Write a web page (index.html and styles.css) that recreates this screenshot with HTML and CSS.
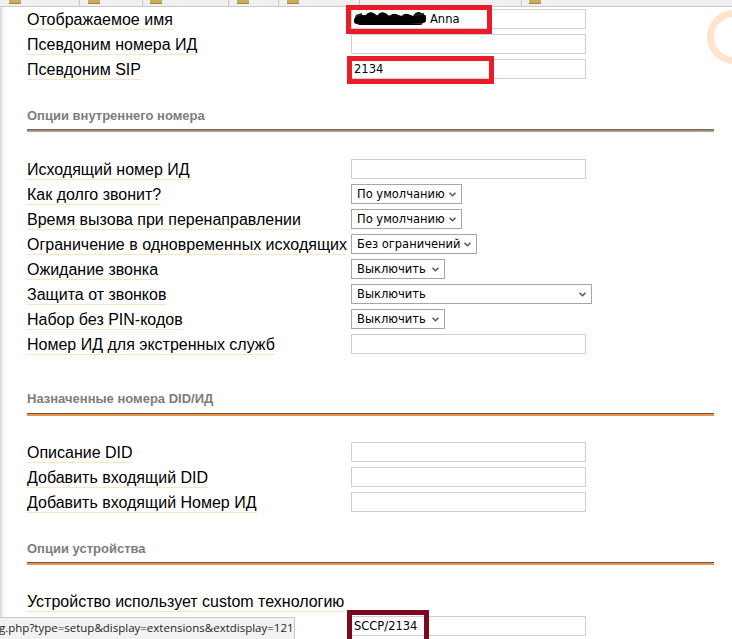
FILE: index.html
```html
<!DOCTYPE html>
<html lang="ru">
<head>
<meta charset="utf-8">
<title>Extension</title>
<link rel="stylesheet" href="styles.css">
</head>
<body>
<div class="tabs">
  <div class="tab t1"><span class="ico"></span></div>
  <div class="tab t2"><span class="ico"></span></div>
  <div class="tab t3"><span class="ico"></span></div>
  <div class="tab t4"><span class="ico"></span></div>
  <div class="tab t5"><span class="ico"></span></div>
  <div class="tab t6"></div>
  <div class="tab t7"><span class="ico"></span></div>
</div>

<div class="ring"></div>

<main class="content">
  <div class="row">
    <div class="lab"><span>Отображаемое имя</span></div>
    <div class="field">
      <div class="inp">
        <svg class="scribble" width="72" height="16" viewBox="0 0 72 16"><path d="M3 9 C6 4,10 12,14 6 S22 12,26 6 S34 12,38 7 S46 12,50 7 S58 12,62 6 S68 10,70 7 M3 10 L69 9 M4 7 L68 8 M6 11 L66 11" fill="none" stroke="#000" stroke-width="6" stroke-linecap="round"/><path d="M2 5 L8 3 M60 4 L70 3" stroke="#222" stroke-width="2" fill="none"/></svg>
        <span class="val">Anna</span>
      </div>
      <div class="mark red m1"></div>
    </div>
  </div>
  <div class="row">
    <div class="lab"><span>Псевдоним номера ИД</span></div>
    <div class="field"><div class="inp"></div></div>
  </div>
  <div class="row">
    <div class="lab"><span>Псевдоним SIP</span></div>
    <div class="field">
      <div class="inp"><span class="val">2134</span></div>
      <div class="mark red m2"></div>
    </div>
  </div>

  <div class="section s1">
    <div class="sec-title">Опции внутреннего номера</div>
    <div class="sec-line grey"></div>
  </div>

  <div class="row">
    <div class="lab"><span>Исходящий номер ИД</span></div>
    <div class="field"><div class="inp"></div></div>
  </div>
  <div class="row">
    <div class="lab"><span>Как долго звонит?</span></div>
    <div class="field"><div class="sel w111"><span>По умолчанию</span><svg width="7" height="5" viewBox="0 0 7 5"><path d="M0.5 0.8 L3.5 3.8 L6.5 0.8" fill="none" stroke="#555" stroke-width="1.5"/></svg></div></div>
  </div>
  <div class="row">
    <div class="lab"><span>Время вызова при перенаправлении</span></div>
    <div class="field"><div class="sel w111"><span>По умолчанию</span><svg width="7" height="5" viewBox="0 0 7 5"><path d="M0.5 0.8 L3.5 3.8 L6.5 0.8" fill="none" stroke="#555" stroke-width="1.5"/></svg></div></div>
  </div>
  <div class="row">
    <div class="lab"><span>Ограничение в одновременных исходящих</span></div>
    <div class="field"><div class="sel w126"><span>Без ограничений</span><svg width="7" height="5" viewBox="0 0 7 5"><path d="M0.5 0.8 L3.5 3.8 L6.5 0.8" fill="none" stroke="#555" stroke-width="1.5"/></svg></div></div>
  </div>
  <div class="row">
    <div class="lab"><span>Ожидание звонка</span></div>
    <div class="field"><div class="sel w94"><span>Выключить</span><svg width="7" height="5" viewBox="0 0 7 5"><path d="M0.5 0.8 L3.5 3.8 L6.5 0.8" fill="none" stroke="#555" stroke-width="1.5"/></svg></div></div>
  </div>
  <div class="row">
    <div class="lab"><span>Защита от звонков</span></div>
    <div class="field"><div class="sel w241"><span>Выключить</span><svg width="7" height="5" viewBox="0 0 7 5"><path d="M0.5 0.8 L3.5 3.8 L6.5 0.8" fill="none" stroke="#555" stroke-width="1.5"/></svg></div></div>
  </div>
  <div class="row">
    <div class="lab"><span>Набор без PIN-кодов</span></div>
    <div class="field"><div class="sel w94"><span>Выключить</span><svg width="7" height="5" viewBox="0 0 7 5"><path d="M0.5 0.8 L3.5 3.8 L6.5 0.8" fill="none" stroke="#555" stroke-width="1.5"/></svg></div></div>
  </div>
  <div class="row">
    <div class="lab"><span>Номер ИД для экстренных служб</span></div>
    <div class="field"><div class="inp"></div></div>
  </div>

  <div class="section s3">
    <div class="sec-title">Назначенные номера DID/ИД</div>
    <div class="sec-line"></div>
  </div>

  <div class="row">
    <div class="lab"><span>Описание DID</span></div>
    <div class="field"><div class="inp"></div></div>
  </div>
  <div class="row">
    <div class="lab"><span>Добавить входящий DID</span></div>
    <div class="field"><div class="inp"></div></div>
  </div>
  <div class="row">
    <div class="lab"><span>Добавить входящий Номер ИД</span></div>
    <div class="field"><div class="inp"></div></div>
  </div>

  <div class="section s4">
    <div class="sec-title">Опции устройства</div>
    <div class="sec-line"></div>
  </div>

  <div class="row wide">
    <div class="lab"><span>Устройство использует custom технологию</span></div>
  </div>
  <div class="row">
    <div class="lab"></div>
    <div class="field">
      <div class="inp"><span class="val">SCCP/2134</span></div>
      <div class="mark dark m3"></div>
    </div>
  </div>
</main>

<div class="status">g.php?type=setup&amp;display=extensions&amp;extdisplay=121</div>
</body>
</html>
```

FILE: styles.css
```css
html, body {
  margin: 0;
  padding: 0;
  overflow: hidden;
  height: 639px;
}
body {
  position: relative;
  background: linear-gradient(to right, #d4d4d4 0px, #ececec 2px, #fafafa 4px, #ffffff 6px);
  font-family: "Liberation Sans", Arial, sans-serif;
  color: #000;
}

.tabs {
  display: flex;
  height: 6px;
  background: #f0f0f0;
  border-bottom: 1px solid #c9c9c9;
  overflow: hidden;
}
.tab {
  height: 6px;
  border-right: 1px solid #c6c6c6;
  box-sizing: border-box;
  padding-left: 8px;
}
.tab.t1 { width: 80px; padding-left: 9px; }
.tab.t2 { width: 63px; }
.tab.t3 { width: 86px; padding-left: 7px; }
.tab.t4 { width: 50px; }
.tab.t5 { width: 81px; }
.tab.t6 { width: 162px; }
.tab.t7 { width: 60px; border-right: none; padding-left: 7px; }
.ico {
  display: block;
  width: 12px;
  height: 3px;
  background: #c9ad5a;
  border-bottom: 1px solid #9c8840;
}

.ring {
  position: absolute;
  left: 707px;
  top: 10px;
  width: 40px;
  height: 40px;
  border: 7px solid #fde4ca;
  border-radius: 50%;
}

.content {
  padding-left: 27px;
  padding-right: 18px;
}

.row {
  display: flex;
  height: 25px;
}
.lab {
  width: 324px;
  flex: none;
  padding-top: 4px;
  box-sizing: border-box;
}
.lab span {
  display: inline-block;
  font-size: 16px;
  line-height: 18px;
  border-bottom: 1px solid #fde2c4;
  white-space: nowrap;
}
.row.wide .lab { width: auto; }

.field {
  position: relative;
  padding-top: 2px;
}
.inp {
  width: 235px;
  height: 20px;
  box-sizing: border-box;
  border: 1px solid #cfcfcf;
  background: #fff;
  display: flex;
  align-items: center;
  padding-left: 2px;
  font-family: "DejaVu Sans", sans-serif;
  font-size: 11.5px;
  color: #000;
  gap: 4px;
}
.scribble { flex: none; }

.sel {
  height: 20px;
  box-sizing: border-box;
  border: 1px solid #a6a6a6;
  background: #fff;
  display: flex;
  align-items: center;
  justify-content: space-between;
  padding: 0 5px 0 5px;
  font-family: "DejaVu Sans", sans-serif;
  font-size: 11.5px;
  color: #000;
}
.sel svg { flex: none; }
.w111 { width: 111px; }
.w126 { width: 126px; }
.w94 { width: 94px; }
.w241 { width: 241px; }

.mark {
  position: absolute;
  box-sizing: border-box;
  pointer-events: none;
}
.mark.red { border: 5px solid #ea1c27; }
.mark.dark { border: 5px solid #7b0a1f; }
.m1 { left: -5px; top: -2px; width: 146px; height: 29px; }
.m2 { left: -4px; top: -1px; width: 147px; height: 28px; }
.m3 { left: -4px; top: -4px; width: 82px; height: 40px; }

.section .sec-title {
  font-size: 13px;
  font-weight: bold;
  line-height: 14px;
  color: #7d7d7d;
}
.sec-line {
  height: 3px;
  box-sizing: border-box;
  border-top: 1px solid #5a5a5a;
  background: #f39340;
}
.sec-line.grey {
  border-top: 1px solid #6a6a6a;
  background: linear-gradient(#8a8a8a, #d9a070);
}
.s1 { padding-top: 27px; padding-bottom: 25px; }
.s1 .sec-line { margin-top: 6px; }
.s3 { padding-top: 35px; padding-bottom: 24px; }
.s3 .sec-line { margin-top: 7px; }
.s4 { padding-top: 27px; padding-bottom: 24px; }
.s4 .sec-line { margin-top: 6px; }

.status {
  position: absolute;
  left: 0;
  top: 617px;
  width: 295px;
  height: 22px;
  box-sizing: border-box;
  background: #f2f2f2;
  border-top: 1px solid #c8c8c8;
  border-right: 1px solid #c8c8c8;
  font-family: "Open Sans", sans-serif;
  font-size: 11.5px;
  line-height: 20px;
  color: #1e1e1e;
  white-space: nowrap;
  overflow: hidden;
  text-indent: -1px;
}
```
